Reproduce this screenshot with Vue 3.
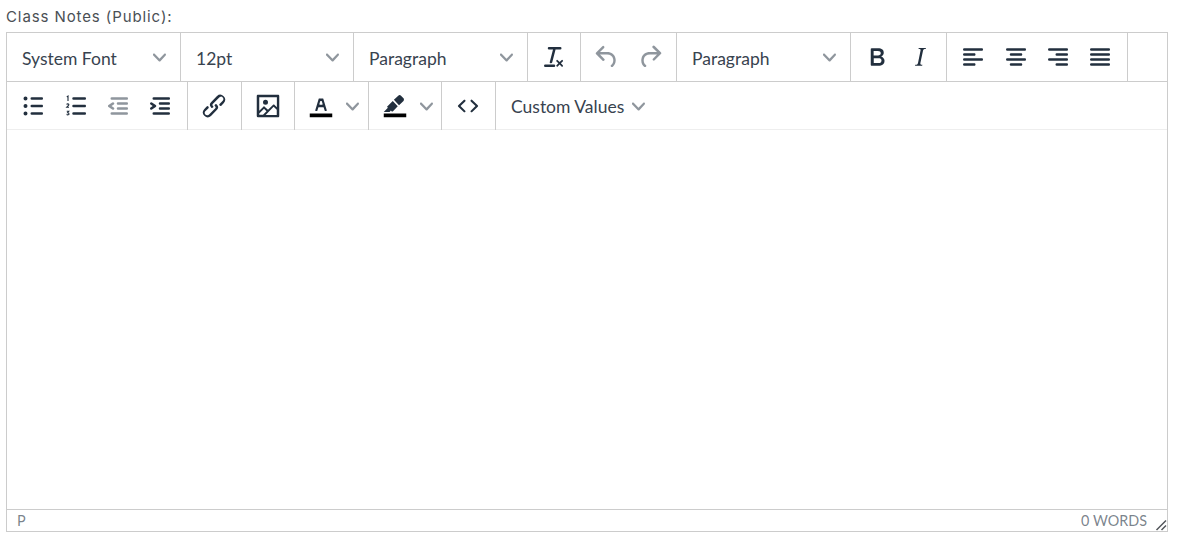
<script setup>
const icons = {
  clear: ['M13.2 6a1 1 0 010 .2l-2.6 10a1 1 0 01-1 .8h-.2a.8.8 0 01-.8-1l2.6-10H8a1 1 0 110-2h9a1 1 0 010 2h-3.8zM5 18h7a1 1 0 010 2H5a1 1 0 010-2zm13 1.5L16.5 18 15 19.5a.7.7 0 01-1-1l1.5-1.5-1.5-1.5a.7.7 0 011-1l1.5 1.5 1.5-1.5a.7.7 0 011 1L17.5 17l1.5 1.5a.7.7 0 01-1 1z'],
  undo: ['M6.4 8H12c3.7 0 6.2 2 6.8 5.1.6 2.7-.4 5.6-2.3 6.8a1 1 0 01-1-1.8c1.1-.6 1.8-2.7 1.4-4.6-.5-2.1-2.1-3.5-4.9-3.5H6.4l3.3 3.3a1 1 0 11-1.4 1.4l-5-5a1 1 0 010-1.4l5-5a1 1 0 011.4 1.4L6.4 8z'],
  redo: ['M17.6 10H12c-2.8 0-4.4 1.4-4.9 3.5-.4 2 .3 4 1.4 4.6a1 1 0 11-1 1.8c-2-1.2-2.9-4.1-2.3-6.8.6-3 3-5.1 6.8-5.1h5.6l-3.3-3.3a1 1 0 111.4-1.4l5 5a1 1 0 010 1.4l-5 5a1 1 0 01-1.4-1.4l3.3-3.3z'],
  bold: ['M7.8 19c-.3 0-.5 0-.6-.2l-.2-.5V5.7c0-.2 0-.4.2-.5l.6-.2h5c1.5 0 2.7.3 3.5 1 .7.6 1.1 1.4 1.1 2.5a3 3 0 01-.6 1.9c-.4.6-1 1-1.6 1.2.4.1.9.3 1.3.6s.8.7 1 1.2c.4.4.5 1 .5 1.6 0 1.3-.4 2.3-1.3 3-.8.7-2.1 1-3.8 1H7.8zm5-8.3c.6 0 1.2-.1 1.6-.5.4-.3.6-.7.6-1.3 0-1.1-.8-1.7-2.3-1.7H9.3v3.5h3.4zm.5 6c.7 0 1.3-.1 1.7-.4.4-.4.6-.9.6-1.5s-.2-1-.7-1.4c-.4-.3-1-.4-2-.4H9.4v3.8h4z'],
  italic: ['M16.7 4.7l-.1.9h-.3c-.6 0-1 0-1.4.3-.3.3-.4.6-.5 1.1l-2.1 9.8v.6c0 .5.4.8 1.4.8h.2l-.2.8H8l.2-.8h.2c1.1 0 1.8-.5 2-1.5l2-9.8.1-.5c0-.6-.4-.8-1.4-.8h-.3l.2-.9h5.8z'],
  left: ['M5 5h14c.6 0 1 .4 1 1s-.4 1-1 1H5a1 1 0 110-2zm0 4h8c.6 0 1 .4 1 1s-.4 1-1 1H5a1 1 0 110-2zm0 8h8c.6 0 1 .4 1 1s-.4 1-1 1H5a1 1 0 010-2zm0-4h14c.6 0 1 .4 1 1s-.4 1-1 1H5a1 1 0 010-2z'],
  center: ['M5 5h14c.6 0 1 .4 1 1s-.4 1-1 1H5a1 1 0 110-2zm3 4h8c.6 0 1 .4 1 1s-.4 1-1 1H8a1 1 0 110-2zm0 8h8c.6 0 1 .4 1 1s-.4 1-1 1H8a1 1 0 010-2zm-3-4h14c.6 0 1 .4 1 1s-.4 1-1 1H5a1 1 0 010-2z'],
  right: ['M5 5h14c.6 0 1 .4 1 1s-.4 1-1 1H5a1 1 0 110-2zm6 4h8c.6 0 1 .4 1 1s-.4 1-1 1h-8a1 1 0 010-2zm0 8h8c.6 0 1 .4 1 1s-.4 1-1 1h-8a1 1 0 010-2zm-6-4h14c.6 0 1 .4 1 1s-.4 1-1 1H5a1 1 0 010-2z'],
  justify: ['M5 5h14c.6 0 1 .4 1 1s-.4 1-1 1H5a1 1 0 110-2zm0 4h14c.6 0 1 .4 1 1s-.4 1-1 1H5a1 1 0 110-2zm0 4h14c.6 0 1 .4 1 1s-.4 1-1 1H5a1 1 0 010-2zm0 4h14c.6 0 1 .4 1 1s-.4 1-1 1H5a1 1 0 010-2z'],
  bullets: ['M11 5h8c.6 0 1 .4 1 1s-.4 1-1 1h-8a1 1 0 010-2zm0 6h8c.6 0 1 .4 1 1s-.4 1-1 1h-8a1 1 0 010-2zm0 6h8c.6 0 1 .4 1 1s-.4 1-1 1h-8a1 1 0 010-2zM4.4 6a1.6 1.6 0 113.2 0 1.6 1.6 0 01-3.2 0zm0 6a1.6 1.6 0 113.2 0 1.6 1.6 0 01-3.2 0zm0 6a1.6 1.6 0 113.2 0 1.6 1.6 0 01-3.2 0z'],
  numbers: ['M10 5h9c.6 0 1 .4 1 1s-.4 1-1 1h-9a1 1 0 010-2zm0 6h9c.6 0 1 .4 1 1s-.4 1-1 1h-9a1 1 0 010-2zm0 6h9c.6 0 1 .4 1 1s-.4 1-1 1h-9a1 1 0 010-2z'],
  outdent: ['M7 5h12c.6 0 1 .4 1 1s-.4 1-1 1H7a1 1 0 110-2zm5 4h7c.6 0 1 .4 1 1s-.4 1-1 1h-7a1 1 0 010-2zm0 4h7c.6 0 1 .4 1 1s-.4 1-1 1h-7a1 1 0 010-2zm-5 4h12a1 1 0 010 2H7a1 1 0 010-2zm1.6-3.8a1 1 0 01-1.2 1.6l-3-2a1 1 0 010-1.6l3-2a1 1 0 011.2 1.6L6.8 12l1.8 1.2z'],
  indent: ['M7 5h12c.6 0 1 .4 1 1s-.4 1-1 1H7a1 1 0 110-2zm5 4h7c.6 0 1 .4 1 1s-.4 1-1 1h-7a1 1 0 010-2zm0 4h7c.6 0 1 .4 1 1s-.4 1-1 1h-7a1 1 0 010-2zm-5 4h12a1 1 0 010 2H7a1 1 0 010-2zm-2.6-3.8L6.2 12l-1.8-1.2a1 1 0 011.2-1.6l3 2a1 1 0 010 1.6l-3 2a1 1 0 11-1.2-1.6z'],
  link: ['M6.2 12.3a1 1 0 011.4 1.4l-2.1 2a2 2 0 102.7 2.8l4.8-4.8a1 1 0 000-1.4 1 1 0 111.4-1.3 2.9 2.9 0 010 4L9.6 20a3.9 3.9 0 01-5.5-5.5l2-2.2zm11.6-.6a1 1 0 01-1.4-1.4l2-2a2 2 0 10-2.6-2.8L11 10.3a1 1 0 000 1.4A1 1 0 119.6 13a2.9 2.9 0 010-4L14.4 4a3.9 3.9 0 015.5 5.5l-2 2.2z'],
  image: ['M5 15.7l3.3-3.2c.3-.3.7-.3 1 0L12 15l4.1-4c.3-.4.8-.4 1 0l2 1.9V5H5v10.7zM5 18V19h3l2.8-2.9-2-2L5 17.9zm14-3l-2.5-2.4-6.4 6.5H19v-4zM4 3h16c.6 0 1 .4 1 1v16c0 .6-.4 1-1 1H4a1 1 0 01-1-1V4c0-.6.4-1 1-1zm6 8a2 2 0 100-4 2 2 0 000 4z'],
  text: ['M8.7 16h-.8a.5.5 0 01-.5-.6l2.7-9c.1-.3.3-.4.5-.4h2.8c.2 0 .4.1.5.4l2.7 9a.5.5 0 01-.5.6h-.8a.5.5 0 01-.4-.4l-.7-2.2c0-.3-.3-.4-.5-.4h-3.4c-.2 0-.4.1-.5.4l-.7 2.2c0 .3-.2.4-.4.4zm2.6-7.6l-.6 2a.5.5 0 00.5.6h1.6a.5.5 0 00.5-.6l-.6-2c0-.3-.3-.4-.5-.4h-.4c-.2 0-.4.1-.5.4z'],
  marker: ['M7.7 16.7H3l3.3-3.3-.7-.8L10.2 8l4 4.1-4 4.2c-.2.2-.6.2-.8 0l-.7-.7zm7.5-5.4l-4.1-4.3 3.5-3.3c.6-.6 1.6-.6 2.2 0l2 2.1c.5.6.5 1.5 0 2.1l-3.6 3.4z'],
  code: ['M9.8 15.7c.3.3.3.8 0 1-.3.4-.9.4-1.2 0l-4.4-4.1a.8.8 0 010-1.2l4.4-4.2c.3-.3.9-.3 1.2 0 .3.3.3.8 0 1.1L6 12l3.8 3.7zm4.4 0c-.3.3-.3.8 0 1 .3.4.9.4 1.2 0l4.4-4.1a.8.8 0 000-1.2l-4.4-4.2a.8.8 0 00-1.2 0c-.3.3-.3.8 0 1.1L18 12l-3.8 3.7z'],
}
const chevron = 'M8.7 2.2c.3-.3.8-.3 1 0 .4.4.4.9 0 1.2L5.7 7.8c-.3.3-.9.3-1.2 0L.2 3.4a.8.8 0 010-1.2c.3-.3.8-.3 1.1 0L5 6l3.7-3.8z'

const rowOne = [
  { kind: 'select', label: 'System Font', width: 174 },
  { kind: 'select', label: '12pt', width: 173 },
  { kind: 'select', label: 'Paragraph', width: 174 },
  { kind: 'tools', width: 53, tools: [{ icon: 'clear' }] },
  { kind: 'tools', width: 96, tools: [{ icon: 'undo', off: true }, { icon: 'redo', off: true }] },
  { kind: 'select', label: 'Paragraph', width: 174 },
  { kind: 'tools', width: 96, tools: [{ icon: 'bold' }, { icon: 'italic' }] },
  { kind: 'tools', width: 181, tools: [{ icon: 'left' }, { icon: 'center' }, { icon: 'right' }, { icon: 'justify' }] },
]
const rowTwo = [
  { kind: 'tools', width: 181, tools: [{ icon: 'bullets' }, { icon: 'numbers', digits: true }, { icon: 'outdent', off: true }, { icon: 'indent' }] },
  { kind: 'tools', width: 54, tools: [{ icon: 'link' }] },
  { kind: 'tools', width: 53, tools: [{ icon: 'image' }] },
  { kind: 'split', width: 74, icon: 'text' },
  { kind: 'split', width: 73, icon: 'marker' },
  { kind: 'tools', width: 54, tools: [{ icon: 'code' }] },
]
const rows = [rowOne, rowTwo]
</script>

<template>
  <main class="page">
    <label class="title">Class Notes (Public):</label>
    <section class="editor">
      <div class="toolbar">
        <div v-for="(row, r) in rows" :key="r" class="row">
          <div
            v-for="(group, g) in row"
            :key="g"
            class="group"
            :class="group.kind"
            :style="{ width: group.width + 'px' }"
          >
            <template v-if="group.kind === 'select'">
              <span class="select-label">{{ group.label }}</span>
              <svg class="chevron" viewBox="0 0 10 10"><path :d="chevron" /></svg>
            </template>
            <template v-else-if="group.kind === 'tools'">
              <span v-for="tool in group.tools" :key="tool.icon" class="tool" :class="{ off: tool.off }">
                <svg class="icon" viewBox="0 0 24 24">
                  <path :d="icons[tool.icon][0]" />
                  <g v-if="tool.digits" class="digits">
                    <path d="M4.6 4.7l1-.7v4" />
                    <path d="M4.5 10.8c.4-.7 1.8-.6 1.8.2 0 .6-1.2 1.2-1.8 2h1.9" />
                    <path d="M4.6 16.2h1.6l-.9 1.2c.7 0 1.1.4 1.1.9 0 .8-1.3 1-1.9.4" />
                  </g>
                </svg>
              </span>
            </template>
            <template v-else>
              <svg class="icon" viewBox="0 0 24 24">
                <path class="swatch" d="M3 18h18v3H3z" />
                <path :d="icons[group.icon][0]" />
              </svg>
              <svg class="chevron" viewBox="0 0 10 10"><path :d="chevron" /></svg>
            </template>
          </div>
          <div v-if="r === 1" class="custom">
            <span class="select-label">Custom Values</span>
            <svg class="chevron" viewBox="0 0 10 10"><path :d="chevron" /></svg>
          </div>
        </div>
      </div>
      <div class="content"></div>
      <footer class="status">
        <span>P</span>
        <span class="words">0 WORDS</span>
        <svg class="grip" viewBox="0 0 12 12">
          <path d="M11 1.5 1.5 11M11 6.5 6.5 11" />
        </svg>
      </footer>
    </section>
  </main>
</template>

<style scoped>
.page {
  box-sizing: border-box;
  width: 1188px;
  height: 545px;
  padding: 0 20px 0 6px;
  background: #fff;
  display: flex;
  flex-direction: column;
}
.title {
  height: 32px;
  font: 15px/34px Inter, sans-serif;
  letter-spacing: 0.9px;
  color: #4a4f55;
}
.editor {
  box-sizing: border-box;
  height: 500px;
  border: 1px solid #ccc;
  display: flex;
  flex-direction: column;
  font-family: Lato, sans-serif;
  color: #38434f;
}
.row {
  display: flex;
  height: 48px;
}
.row:first-child {
  border-bottom: 1px solid #ccc;
}
.row:last-child {
  box-shadow: inset 0 -1px 0 #eee;
}
.group {
  box-sizing: border-box;
  display: flex;
  align-items: center;
  border-right: 1px solid #ccc;
  height: 100%;
}
.select {
  justify-content: space-between;
  padding: 0 14px 0 15px;
}
.select-label {
  font-size: 17.5px;
  line-height: 1;
  padding-top: 4px;
  white-space: nowrap;
}
.custom .select-label {
  padding-top: 2px;
}
.tools {
  padding: 0 5px;
}
.tool {
  flex: 0 0 42.4px;
  display: flex;
  justify-content: center;
}
.split {
  padding-left: 11px;
  gap: 10px;
}
.icon {
  width: 30px;
  height: 30px;
  display: block;
  fill: #222f3e;
}
.off .icon {
  opacity: 0.5;
}
.swatch {
  fill: #000;
}
.digits path {
  fill: none;
  stroke: #222f3e;
  stroke-width: 0.9;
}
.chevron {
  width: 13px;
  height: 13px;
  flex: none;
  fill: #222f3e;
  opacity: 0.5;
}
.custom {
  display: flex;
  align-items: center;
  gap: 8px;
  padding-left: 15px;
}
.content {
  flex: 1;
}
.status {
  box-sizing: border-box;
  height: 22px;
  flex: none;
  border-top: 1px solid #ccc;
  display: flex;
  align-items: center;
  justify-content: space-between;
  padding: 0 20px 0 10px;
  font-size: 14.4px;
  color: rgba(34, 47, 62, 0.6);
  position: relative;
}
.grip {
  position: absolute;
  right: 0;
  bottom: 0;
  width: 12px;
  height: 12px;
  fill: none;
  stroke: #52565b;
  stroke-width: 1.5;
}
</style>
